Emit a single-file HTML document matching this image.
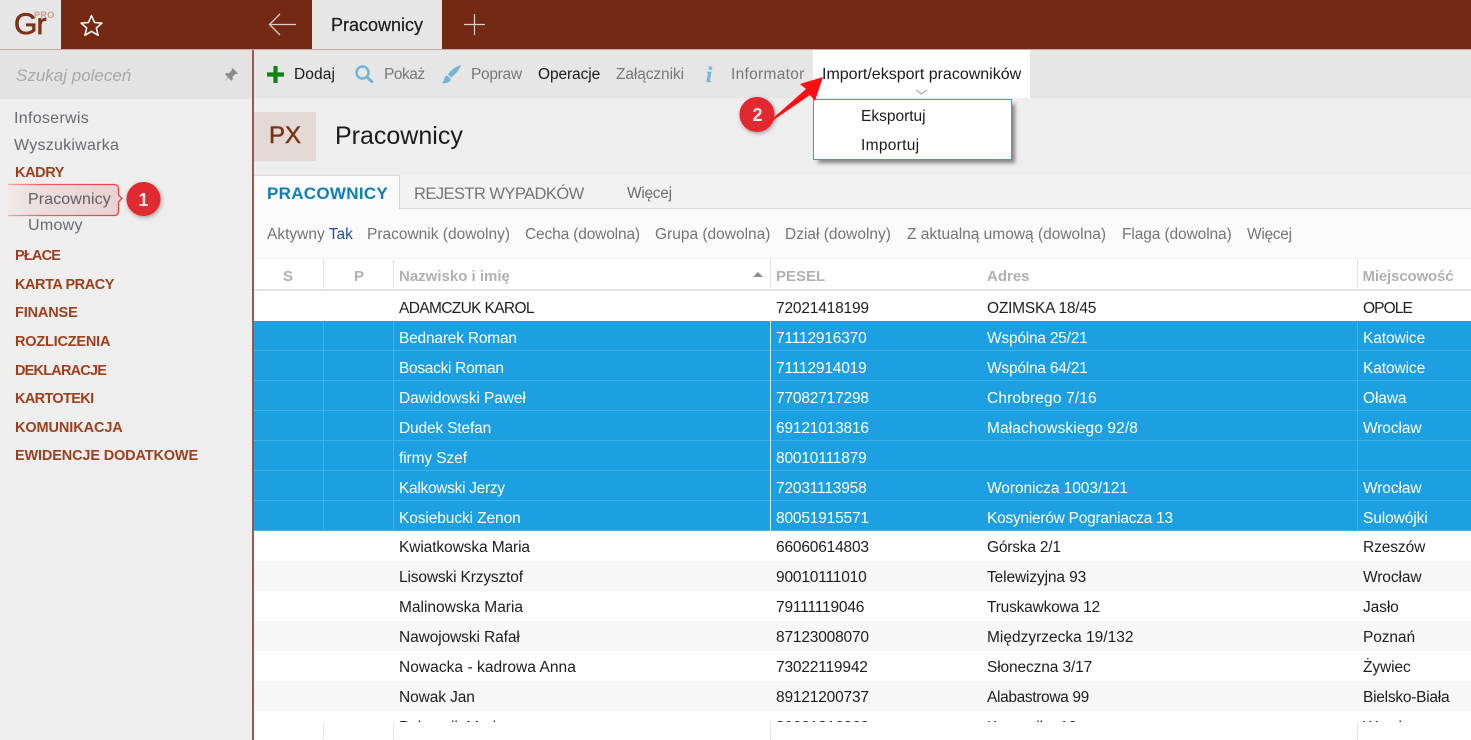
<!DOCTYPE html>
<html lang="pl"><head><meta charset="utf-8"><title>Pracownicy</title>
<style>
html,body{margin:0;padding:0;width:1471px;height:740px;overflow:hidden;background:#fff}
body{position:relative;font-family:"Liberation Sans",sans-serif;font-size:16px;color:#222}
div,span,svg{position:absolute;display:block}
.t{white-space:nowrap;line-height:20px}
.nav{left:15px;font-size:14.5px;font-weight:bold;color:#9c3f1c;white-space:nowrap;line-height:20px}
.g{color:#69696f}
.tb{top:65px;white-space:nowrap;line-height:20px;font-size:15.5px}
.f{top:225px;font-size:15.5px;color:#757575;white-space:nowrap;line-height:20px}
.h{top:267px;font-size:15px;font-weight:bold;color:#b0b0b0;white-space:nowrap;line-height:20px}
.r{left:0;width:1217px;height:30px}
.r span{top:8px;line-height:20px;white-space:nowrap;font-size:15.5px;color:#1d1d1d}
.r.u span{top:7px}
.r .a{left:145px;letter-spacing:-.1px}.r .c{left:522px;letter-spacing:-.18px}.r .d{left:733px;letter-spacing:-.12px}.r .e{left:1109px;letter-spacing:-.1px}
.s{background:#1ca0e2;border-bottom:1px solid #44b0e8;box-sizing:border-box}
.s span{color:#fff}
.z{background:#f7f7f7}
.v{width:1px;background:#45b0e8}
.dot{width:0;border-left:1px dotted #cfcfcf}
</style></head><body>
<div style="left:0;top:0;width:1471px;height:49px;background:#732912"></div>
<div style="left:0;top:49px;width:1471px;height:1px;background:#c2aca5"></div>
<div style="left:0;top:0;width:61px;height:49px;background:#e6e6e6"></div>
<div class="t" style="left:14px;top:7px;font-size:30px;line-height:36px;color:#7d3216;-webkit-text-stroke:.7px #7d3216;letter-spacing:-.8px">Gr</div>
<div class="t" style="left:34px;top:9px;font-size:9px;line-height:12px;font-weight:bold;color:#c29c8f;letter-spacing:.4px">PRO</div>
<svg style="left:79px;top:13px" width="25" height="24" viewBox="0 0 25 24"><path d="M12.5 2.5l3 7 7.5.6-5.7 4.9 1.8 7.3-6.6-4-6.6 4 1.8-7.3L2 10.100l7.500-.6z" fill="none" stroke="#fff" stroke-width="1.500" stroke-linejoin="round"/></svg>
<svg style="left:266px;top:11px" width="32" height="26" viewBox="0 0 32 26"><path d="M30 13.500H4M14 3L3.500 13.500 14 24" fill="none" stroke="#dccfca" stroke-width="1.300"/></svg>
<div style="left:312px;top:0;width:130px;height:49px;background:#e6e6e6"></div>
<div class="t" style="left:331px;top:15px;font-size:18px;color:#1b1b1b;-webkit-text-stroke:.2px #1b1b1b">Pracownicy</div>
<svg style="left:462px;top:12px" width="25" height="25" viewBox="0 0 25 25"><path d="M12.500 2v21M2 12.500h21" stroke="#dccfca" stroke-width="1.200" fill="none"/></svg>

<div style="left:0;top:50px;width:252px;height:690px;background:#eeeeee"></div>
<div style="left:0;top:50px;width:252px;height:49px;background:#e3e3e3"></div>
<div class="t" style="left:16px;top:66px;font-size:17px;font-style:italic;color:#a8a8a8">Szukaj poleceń</div>
<svg style="left:222px;top:66px" width="18" height="18" viewBox="0 0 18 18"><path d="M10.500 2l5.500 5.500-1.500.8-1-.5-3 3 .2 2.700-1.200 1.200-3-3-4.500 4 4-4.500-3-3 1.200-1.200 2.700.2 3-3-.5-1z" fill="#8a8a8a"/></svg>
<div style="left:252px;top:50px;width:2px;height:690px;background:#96594a"></div>

<div class="t g" style="left:14px;top:109px;letter-spacing:.3px">Infoserwis</div>
<div class="t g" style="left:14px;top:136px;letter-spacing:.25px">Wyszukiwarka</div>
<div class="nav" style="top:163px;letter-spacing:-.4px">KADRY</div>
<svg style="left:0;top:178px" width="175" height="44" viewBox="0 0 175 44">
<defs><linearGradient id="p" x1="0" x2="1" y1="0" y2="0"><stop offset="0" stop-color="#f0e8e8"/><stop offset=".3" stop-color="#ecdede"/><stop offset="1" stop-color="#e8d2d2"/></linearGradient>
<linearGradient id="q" x1="0" x2="1" y1="0" y2="0"><stop offset="0" stop-color="#f8a0a0"/><stop offset=".3" stop-color="#f25a60"/><stop offset="1" stop-color="#ee3d44"/></linearGradient>
<filter id="sh" x="-40%" y="-40%" width="180%" height="180%"><feDropShadow dx="1" dy="1.500" stdDeviation="2" flood-color="#000" flood-opacity=".35"/></filter></defs>
<path d="M8 6.500H114q4.500 0 4.500 4.500v6l3.500 3.500-3.500 3.500v9q0 4.500-4.500 4.500H8z" fill="url(#p)"/>
<path d="M8 6.500H114q4.500 0 4.500 4.500v6l3.500 3.500-3.500 3.500v9q0 4.500-4.500 4.500H8" fill="none" stroke="url(#q)" stroke-width="1.300"/>
<circle cx="143.500" cy="21" r="16.500" fill="#df2a30" stroke="#f02028" stroke-width="1" filter="url(#sh)"/>
</svg>
<div class="t" style="left:28px;top:190px;color:#5f5f64;letter-spacing:.1px">Pracownicy</div>
<div class="t" style="left:128px;top:190px;width:31px;text-align:center;color:#f6e6e6;font-weight:bold;font-size:18px">1</div>
<div class="t g" style="left:28px;top:216px;letter-spacing:.3px">Umowy</div>
<div class="nav" style="top:246px;letter-spacing:-.8px">PŁACE</div>
<div class="nav" style="top:275px;letter-spacing:-.45px">KARTA PRACY</div>
<div class="nav" style="top:303px;letter-spacing:-.15px">FINANSE</div>
<div class="nav" style="top:332px;letter-spacing:-.2px">ROZLICZENIA</div>
<div class="nav" style="top:361px;letter-spacing:-.8px">DEKLARACJE</div>
<div class="nav" style="top:389px;letter-spacing:-.65px">KARTOTEKI</div>
<div class="nav" style="top:418px;letter-spacing:-.1px">KOMUNIKACJA</div>
<div class="nav" style="top:446px;letter-spacing:-.15px">EWIDENCJE DODATKOWE</div>

<div style="left:254px;top:50px;width:1217px;height:48px;background:#e6e6e6"></div>
<svg style="left:266px;top:65px" width="19" height="19" viewBox="0 0 19 19"><path d="M9.500 1v17M1 9.500h17" stroke="#0d8414" stroke-width="4.200"/></svg>
<div class="tb" style="left:294px;color:#1b1b1b;letter-spacing:.1px">Dodaj</div>
<svg style="left:354px;top:64px" width="20" height="20" viewBox="0 0 20 20"><circle cx="8.500" cy="8.500" r="6" fill="none" stroke="#72b5d3" stroke-width="2.400"/><path d="M13 13l5.500 5.500" stroke="#72b5d3" stroke-width="3"/></svg>
<div class="tb g" style="left:384px;color:#777;letter-spacing:-.5px">Pokaż</div>
<svg style="left:441px;top:64px" width="20" height="20" viewBox="0 0 20 20"><path d="M20 1c-1 4-6 10-10 12.500L7 10.500C9 6.500 15 2.500 20 1zM6 11.500C2.500 12 4 16.500 1 19c5 .8 9.500-1 8.500-4.500z" fill="#72b5d3"/></svg>
<div class="tb g" style="left:471px;color:#777;letter-spacing:-.3px">Popraw</div>
<div class="tb" style="left:538px;color:#1b1b1b;letter-spacing:-.1px">Operacje</div>
<div class="tb g" style="left:616px;color:#777;letter-spacing:-.1px">Załączniki</div>
<div class="t" style="left:706px;top:63px;font-family:'Liberation Serif',serif;font-style:italic;font-weight:bold;font-size:22px;line-height:24px;color:#79b8d5;-webkit-text-stroke:.5px #79b8d5">i</div>
<div class="tb g" style="left:731px;color:#777;letter-spacing:.3px">Informator</div>
<div style="left:813px;top:50px;width:217px;height:48px;background:#fff"></div>
<div class="tb" style="left:822px;font-size:16px;color:#1b1b1b">Import/eksport pracowników</div>
<svg style="left:915px;top:89px" width="13" height="7" viewBox="0 0 13 7"><path d="M1 1l5.500 4L12 1" fill="none" stroke="#9a9a9a" stroke-width="1"/></svg>

<div style="left:254px;top:98px;width:1217px;height:77px;background:#eeeeee"></div>
<div style="left:254px;top:112px;width:62px;height:49px;background:#e3dad8"></div>
<div class="t" style="left:254px;top:123px;width:62px;text-align:center;font-size:24px;line-height:26px;color:#7c3217;-webkit-text-stroke:.5px #7c3217">PX</div>
<div class="t" style="left:335px;top:122px;font-size:25px;line-height:28px;color:#1b1b1b">Pracownicy</div>

<div style="left:254px;top:175px;width:1217px;height:34px;background:#f2f2f2;border-bottom:1px solid #d9d9d9;box-sizing:border-box"></div>
<div style="left:254px;top:175px;width:146px;height:34px;background:#fafafa;border-top:1px solid #dcdcdc;border-right:1px solid #d4d4d4;box-sizing:border-box"></div>
<div class="t" style="left:267px;top:184px;font-size:17px;font-weight:bold;color:#0f7fb3;letter-spacing:.3px">PRACOWNICY</div>
<div class="t" style="left:414px;top:184px;font-size:16.5px;color:#757575;letter-spacing:-.55px">REJESTR WYPADKÓW</div>
<div class="t" style="left:627px;top:184px;font-size:15.500px;color:#6f6f6f;letter-spacing:-.3px">Więcej</div>
<div style="left:254px;top:209px;width:1217px;height:50px;background:#fafafa;border-bottom:1px solid #efefef;box-sizing:border-box"></div>
<div class="f" style="left:267px">Aktywny <b style="font-weight:normal;color:#1f4fa8">Tak</b></div>
<div class="f" style="left:367px">Pracownik (dowolny)</div>
<div class="f" style="left:525px;letter-spacing:-.15px">Cecha (dowolna)</div>
<div class="f" style="left:655px">Grupa (dowolna)</div>
<div class="f" style="left:785px">Dział (dowolny)</div>
<div class="f" style="left:907px">Z aktualną umową (dowolna)</div>
<div class="f" style="left:1122px;letter-spacing:-.1px">Flaga (dowolna)</div>
<div class="f" style="left:1247px;letter-spacing:-.3px">Więcej</div>

<div style="left:254px;top:259px;width:1217px;height:32px;background:#fff;border-bottom:2px solid #e3e3e3;box-sizing:border-box"></div>
<div class="h" style="left:283px">S</div>
<div class="h" style="left:354px">P</div>
<div class="h" style="left:399px">Nazwisko i imię</div>
<svg style="left:752px;top:271px" width="12" height="7" viewBox="0 0 12 7"><path d="M1 6l5-5 5 5z" fill="#8d8d8d"/></svg>
<div class="h" style="left:776px">PESEL</div>
<div class="h" style="left:987px">Adres</div>
<div class="h" style="left:1362.5px;letter-spacing:-.15px">Miejscowość</div>
<div class="dot" style="left:323px;top:260px;height:30px"></div>
<div class="dot" style="left:393px;top:260px;height:30px"></div>
<div class="dot" style="left:770px;top:260px;height:30px"></div>
<div class="dot" style="left:1357px;top:260px;height:30px"></div>

<div style="left:254px;top:291px;width:1217px;height:431px;overflow:hidden">
<div class="r" style="top:0"><span class="a" style="letter-spacing:-.64px">ADAMCZUK KAROL</span><span class="c">72021418199</span><span class="d" style="letter-spacing:-.22px">OZIMSKA 18/45</span><span class="e" style="letter-spacing:-.9px">OPOLE</span></div>
<div class="r s" style="top:30px"><span class="a" style="letter-spacing:-.2px">Bednarek Roman</span><span class="c">71112916370</span><span class="d" style="letter-spacing:-.22px">Wspólna 25/21</span><span class="e">Katowice</span></div>
<div class="r s" style="top:60px"><span class="a" style="letter-spacing:-.3px">Bosacki Roman</span><span class="c">71112914019</span><span class="d" style="letter-spacing:-.22px">Wspólna 64/21</span><span class="e">Katowice</span></div>
<div class="r s" style="top:90px"><span class="a">Dawidowski Paweł</span><span class="c">77082717298</span><span class="d" style="letter-spacing:.15px">Chrobrego 7/16</span><span class="e">Oława</span></div>
<div class="r s" style="top:120px"><span class="a" style="letter-spacing:-.15px">Dudek Stefan</span><span class="c">69121013816</span><span class="d" style="letter-spacing:.1px">Małachowskiego 92/8</span><span class="e">Wrocław</span></div>
<div class="r s" style="top:150px"><span class="a">firmy Szef</span><span class="c">80010111879</span></div>
<div class="r s" style="top:180px"><span class="a" style="letter-spacing:-.3px">Kalkowski Jerzy</span><span class="c">72031113958</span><span class="d" style="letter-spacing:-.06px">Woronicza 1003/121</span><span class="e">Wrocław</span></div>
<div class="r s" style="top:210px"><span class="a">Kosiebucki Zenon</span><span class="c">80051915571</span><span class="d" style="letter-spacing:-.25px">Kosynierów Pograniacza 13</span><span class="e">Sulowójki</span></div>
<div class="r u" style="top:240px"><span class="a">Kwiatkowska Maria</span><span class="c">66060614803</span><span class="d" style="letter-spacing:-.2px">Górska 2/1</span><span class="e">Rzeszów</span></div>
<div class="r u z" style="top:270px"><span class="a" style="letter-spacing:-.15px">Lisowski Krzysztof</span><span class="c">90010111010</span><span class="d">Telewizyjna 93</span><span class="e">Wrocław</span></div>
<div class="r u" style="top:300px"><span class="a" style="letter-spacing:0">Malinowska Maria</span><span class="c">79111119046</span><span class="d" style="letter-spacing:-.2px">Truskawkowa 12</span><span class="e">Jasło</span></div>
<div class="r u z" style="top:330px"><span class="a">Nawojowski Rafał</span><span class="c">87123008070</span><span class="d" style="letter-spacing:0">Międzyrzecka 19/132</span><span class="e">Poznań</span></div>
<div class="r u" style="top:360px"><span class="a" style="letter-spacing:.05px">Nowacka - kadrowa Anna</span><span class="c">73022119942</span><span class="d">Słoneczna 3/17</span><span class="e">Żywiec</span></div>
<div class="r u z" style="top:390px"><span class="a">Nowak Jan</span><span class="c">89121200737</span><span class="d" style="letter-spacing:-.35px">Alabastrowa 99</span><span class="e" style="letter-spacing:-.25px">Bielsko-Biała</span></div>
<div class="r u" style="top:420px"><span class="a">Pobocnik Maria</span><span class="c">89021816862</span><span class="d">Kopernika 12</span><span class="e">Wrocław</span></div>
</div>
<div class="v" style="left:323px;top:321px;height:210px"></div>
<div class="v" style="left:393px;top:321px;height:210px"></div>
<div class="v" style="left:770px;top:321px;height:210px;background:#d8eefa"></div>
<div class="v" style="left:1357px;top:321px;height:210px"></div>
<div class="dot" style="left:323px;top:723px;height:17px"></div>
<div class="dot" style="left:393px;top:723px;height:17px"></div>
<div class="dot" style="left:770px;top:723px;height:17px"></div>
<div class="dot" style="left:1357px;top:723px;height:17px"></div>

<div style="left:813px;top:99px;width:199px;height:61px;background:#2f9fdc;box-shadow:4px 4px 4px -1px rgba(0,0,0,.45)"></div>
<div style="left:814px;top:100px;width:197px;height:59px;background:#fff"></div>
<div class="t" style="left:861px;top:107px;font-size:15.500px;color:#1b1b1b">Eksportuj</div>
<div class="t" style="left:861px;top:136px;font-size:15.500px;color:#1b1b1b;letter-spacing:.3px">Importuj</div>

<svg style="left:730px;top:70px" width="100" height="70" viewBox="730 70 100 70">
<defs><filter id="sh2" x="-40%" y="-40%" width="180%" height="180%"><feDropShadow dx="1" dy="1.500" stdDeviation="2" flood-color="#000" flood-opacity=".35"/></filter></defs>
<circle cx="757" cy="114.500" r="17" fill="#df2c31" stroke="#f02028" stroke-width="1" filter="url(#sh2)"/>
<path d="M823 77L800 84l6 5-44 39 48-33 5 6z" fill="#fb0f15"/>
</svg>
<div class="t" style="left:742px;top:105px;width:31px;text-align:center;color:#f6e6e6;font-weight:bold;font-size:18px">2</div>
</body></html>
